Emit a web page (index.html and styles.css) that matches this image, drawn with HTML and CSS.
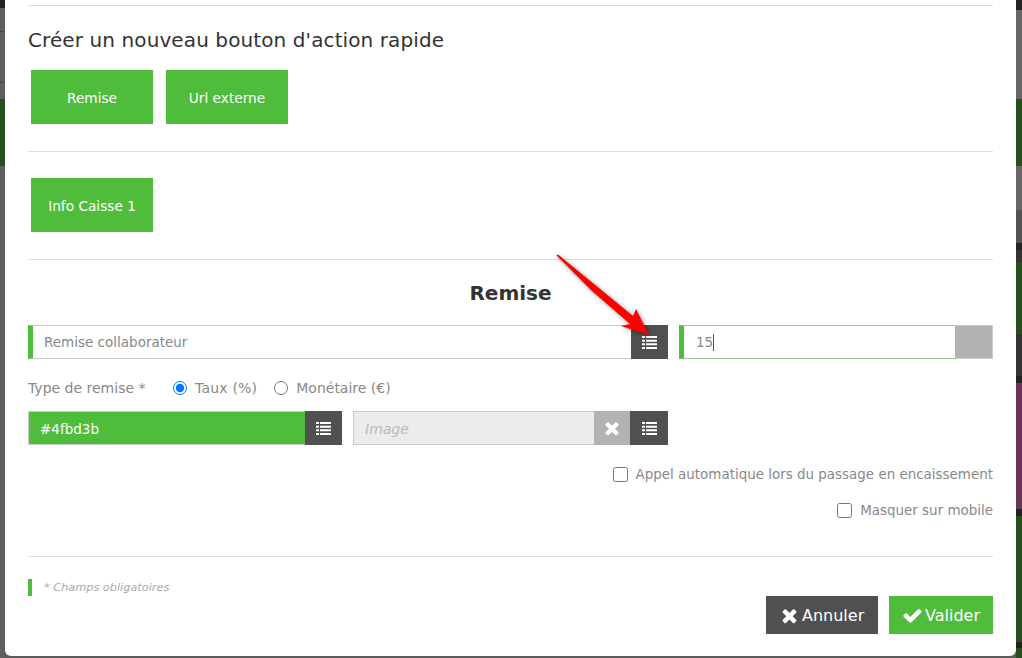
FILE: index.html
```html
<!DOCTYPE html>
<html lang="fr">
<head>
    <meta charset="UTF-8">
    <title>Bouton d'action rapide</title>
    <link rel="stylesheet" href="styles.css">
</head>
<body>
    <svg class="icon-defs" width="0" height="0" aria-hidden="true">
        <symbol id="icon-list" viewBox="0 0 15 13">
            <path d="M0 0h3v2H0zM4 0h11v2H4zM0 3.7h3v2H0zM4 3.7h11v2H4zM0 7.3h3v2H0zM4 7.3h11v2H4zM0 11h3v2H0zM4 11h11v2H4z"/>
        </symbol>
        <symbol id="icon-times" viewBox="0 0 1792 1792">
            <path d="M1490 1322q0 40-28 68l-136 136q-28 28-68 28t-68-28l-294-294-294 294q-28 28-68 28t-68-28l-136-136q-28-28-28-68t28-68l294-294-294-294q-28-28-28-68t28-68l136-136q28-28 68-28t68 28l294 294 294-294q28-28 68-28t68 28l136 136q28 28 28 68t-28 68l-294 294 294 294q28 28 28 68z"/>
        </symbol>
        <symbol id="icon-check" viewBox="0 0 1792 1792">
            <path d="M1671 566q0 40-28 68l-724 724-136 136q-28 28-68 28t-68-28l-136-136-362-362q-28-28-28-68t28-68l136-136q28-28 68-28t68 28l294 295 656-657q28-28 68-28t68 28l136 136q28 28 28 68z"/>
        </symbol>
    </svg>

    <div class="backdrop">
        <div class="strip strip-left">
            <div class="band-dark"></div>
            <div class="band-grey band-lines"></div>
            <div class="band-green"></div>
            <div class="band-grey"></div>
        </div>
        <div class="strip strip-right">
            <div class="band-dark"></div>
            <div class="band-grey"></div>
            <div class="band-green"></div>
            <div class="band-grey"></div>
            <div class="band-mid"></div>
            <div class="band-dark"></div>
            <div class="band-coal"></div>
            <div class="band-green"></div>
            <div class="band-coal"></div>
            <div class="band-dark"></div>
            <div class="band-purple"></div>
            <div class="band-dark"></div>
            <div class="band-green"></div>
            <div class="band-dark"></div>
            <div class="band-green"></div>
        </div>
    </div>

    <div class="modal">
        <hr>
        <h4 class="modal-title">Créer un nouveau bouton d'action rapide</h4>
        <div class="tile-row tile-row-first">
            <button class="tile">Remise</button>
            <button class="tile">Url externe</button>
        </div>
        <hr class="sep-tiles">
        <div class="tile-row tile-row-second">
            <button class="tile">Info Caisse 1</button>
        </div>
        <hr class="sep-tiles">

        <h3 class="form-title">Remise</h3>

        <div class="form-row form-row-first">
            <div class="field field-wide field-required">
                <input type="text" placeholder="Remise collaborateur">
                <button class="addon addon-dark"><svg class="icon-list"><use href="#icon-list"/></svg></button>
            </div>
            <div class="field field-narrow field-required field-focus">
                <div class="value">15<span class="caret"></span></div>
                <span class="addon addon-grey"></span>
            </div>
        </div>

        <div class="type-row">
            <span class="type-label">Type de remise *</span>
            <label class="radio radio-first"><input type="radio" name="type" checked>Taux (%)</label>
            <label class="radio"><input type="radio" name="type">Monétaire (€)</label>
        </div>

        <div class="form-row form-row-third">
            <div class="field field-narrow field-colour">
                <input type="text" value="#4fbd3b">
                <button class="addon addon-dark"><svg class="icon-list"><use href="#icon-list"/></svg></button>
            </div>
            <div class="field field-image">
                <input type="text" placeholder="Image" disabled>
                <button class="addon addon-clear"><svg class="icon-times"><use href="#icon-times"/></svg></button>
                <button class="addon addon-dark"><svg class="icon-list"><use href="#icon-list"/></svg></button>
            </div>
        </div>

        <label class="check check-first"><input type="checkbox">Appel automatique lors du passage en encaissement</label>
        <label class="check check-second"><input type="checkbox">Masquer sur mobile</label>

        <hr class="sep-footer">
        <div class="modal-footer">
            <p class="required-note">* Champs obligatoires</p>
            <div class="actions">
                <button class="action action-cancel"><svg><use href="#icon-times"/></svg>Annuler</button>
                <button class="action action-ok"><svg><use href="#icon-check"/></svg>Valider</button>
            </div>
        </div>
    </div>

    <svg class="arrow" width="110" height="100" viewBox="0 0 110 100" aria-hidden="true">
        <polygon points="6.5,5.5 8,4.5 83,66 86,59 99,85 71,76 80,74 42,41"/>
    </svg>
</body>
</html>
```

FILE: styles.css
```css
* {
    box-sizing: border-box;
}

html, body {
    height: 100%;
}

body {
    margin: 0;
    overflow: hidden;
    font-family: "DejaVu Sans", Verdana, sans-serif;
    color: #888;
    background-color: #5c5c5c;
}

button, input {
    font-family: inherit;
}

.icon-defs {
    position: absolute;
}

/* what shows of the page behind the modal */
.backdrop {
    position: absolute;
    inset: 0;
    display: flex;
    justify-content: space-between;
}

.strip {
    display: grid;
}

.strip-left {
    width: 5px;
    grid-template-rows: 8px 91px 67px 1fr;
}

.strip-right {
    width: 6px;
    grid-template-rows: 10px 89px 67px 44px 33px 7px 12px 72px 42px 7px 126px 7px 126px 6px 1fr;
}

.band-dark { background-color: #232323; }
.band-grey { background-color: #676767; }
.band-mid { background-color: #535353; }
.band-coal { background-color: #333; }
.band-green { background-color: #24501c; }
.band-purple { background-color: #663558; }

.strip-left .band-grey {
    background-color: #5e5e5e;
}

.band-lines {
    background-image: linear-gradient(#474747, #474747), linear-gradient(#474747, #474747);
    background-size: 100% 1px;
    background-position: 0 23px, 0 74px;
    background-repeat: no-repeat;
}

/* modal */
.modal {
    position: absolute;
    top: 0;
    left: 5px;
    width: 1011px;
    height: 656px;
    padding: 5px 23px 0;
    background: #fff;
    border-radius: 0 0 6px 6px;
}

hr {
    height: 1px;
    margin: 0;
    border: none;
    background-color: #ddd;
}

.modal-title {
    margin: 22px 0 0;
    font-size: 20px;
    line-height: 24px;
    font-weight: normal;
    letter-spacing: 0.1px;
    color: #333;
}

.tile-row {
    display: flex;
    gap: 13px;
    padding-left: 3px;
}

.tile-row-first {
    margin-top: 18px;
}

.tile-row-second {
    margin-top: 26px;
}

.sep-tiles {
    margin-top: 27px;
}

.tile {
    width: 122px;
    height: 54px;
    padding: 1px 0 0;
    border: none;
    background-color: #4fbd3b;
    color: #fff;
    font-size: 13.7px;
}

.form-title {
    margin: 21px 0 0;
    font-size: 20px;
    line-height: 24px;
    text-align: center;
    color: #333;
}

.form-row {
    display: flex;
    gap: 11px;
}

.form-row-first {
    margin-top: 20px;
}

.form-row-third {
    margin-top: 13px;
}

.field {
    display: flex;
    height: 34px;
    border: 1px solid #ccc;
    border-right: none;
}

.field input, .value {
    flex: 1;
    min-width: 0;
    height: 100%;
    padding: 0 11px;
    border: none;
    outline: none;
    background: transparent;
    font-size: 13.5px;
    color: #888;
}

.field input::placeholder {
    color: #888;
    opacity: 1;
}

.field-wide {
    width: 640px;
}

.field-narrow {
    width: 314px;
}

.field-required {
    border-left: 5px solid #4fbd3b;
}

.field-focus {
    border-top-color: #9cc796;
    border-bottom-color: #9cc796;
}

.value {
    padding-left: 12px;
    line-height: 32px;
}

.caret {
    display: inline-block;
    width: 1px;
    height: 17px;
    background-color: #555;
    vertical-align: -4px;
}

.addon {
    flex: none;
    width: 37px;
    height: 34px;
    margin: -1px 0;
    padding: 0;
    border: none;
    display: flex;
    align-items: center;
    justify-content: center;
    fill: #fff;
}

.addon-dark {
    background-color: #505050;
}

.addon-grey {
    width: 38px;
    background-color: #b2b2b2;
    border: 1px solid #ccc;
    border-left: none;
}

.addon-clear {
    width: 36px;
    background-color: #b2b2b2;
}

.field-image .addon-dark {
    width: 38px;
}

.icon-list {
    width: 15px;
    height: 13px;
}

.icon-times {
    width: 20px;
    height: 20px;
}

.type-row {
    display: flex;
    align-items: center;
    height: 20px;
    margin-top: 19px;
    font-size: 14px;
}

.type-label {
    width: 145px;
}

.radio {
    display: flex;
    align-items: center;
    margin-right: 17px;
}

.radio input {
    width: 14px;
    height: 14px;
    margin: 0 8px 0 0;
}

.radio-first {
    letter-spacing: 0.2px;
}

.form-row-third .field input {
    padding-top: 1px;
}

.field-colour {
    background-color: #4fbd3b;
}

.field-colour input {
    color: #fff;
}

.field-image {
    width: 315px;
    background-color: #ececec;
}

.field-image input {
    font-style: italic;
    font-size: 14px;
}

.field-image input::placeholder {
    color: #bbb;
}

.check {
    display: flex;
    align-items: center;
    justify-content: flex-end;
    height: 20px;
    font-size: 13.45px;
}

.check input {
    width: 15px;
    height: 15px;
    margin: 0 8px 0 0;
}

.check-first {
    margin-top: 19px;
}

.check-second {
    margin-top: 16px;
}

.sep-footer {
    margin-top: 36px;
}

.modal-footer {
    display: flex;
    justify-content: space-between;
    margin-top: 22px;
}

.required-note {
    height: 17px;
    margin: 0;
    padding-left: 12px;
    border-left: 4px solid #4fbd3b;
    font-size: 11.3px;
    line-height: 17px;
    font-style: italic;
    color: #aaa;
}

.actions {
    display: flex;
    gap: 11px;
    margin-top: 17px;
}

.action {
    display: flex;
    align-items: center;
    gap: 2px;
    height: 38px;
    border: none;
    color: #fff;
    fill: #fff;
    font-size: 16px;
}

.action svg {
    width: 21px;
    height: 21px;
}

.action-cancel {
    width: 112px;
    padding: 0 0 0 13px;
    background-color: #505050;
}

.action-ok {
    width: 104px;
    padding: 0 0 0 13px;
    background-color: #4fbd3b;
}

/* annotation drawn over the screenshot */
.arrow {
    position: absolute;
    top: 250px;
    left: 550px;
    fill: #f00;
    filter: drop-shadow(1px 1px 2px rgba(0, 0, 0, 0.45));
}
```
